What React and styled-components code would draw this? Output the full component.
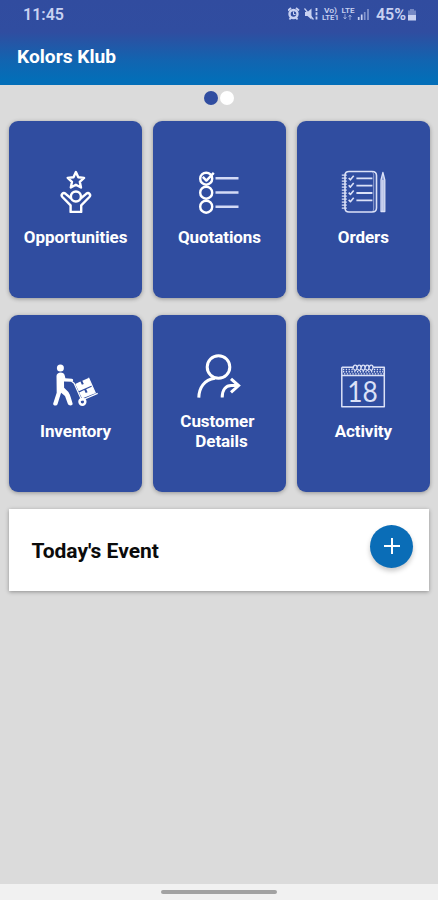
import React from "react"
import styled, { createGlobalStyle } from "styled-components"

const GlobalStyle = createGlobalStyle`
  * {
    box-sizing: border-box;
  }
  body {
    margin: 0;
    background: #dbdbdb;
    font-family: Roboto, "Liberation Sans", sans-serif;
  }
`

const Screen = styled.div`
  height: 900px;
  display: flex;
  flex-direction: column;
  overflow: hidden;
  background: #dbdbdb;
`

const Header = styled.header`
  height: 85px;
  flex: none;
  background: linear-gradient(#314c9f 0, #304da0 32px, #1264b0 60px, #036eb8 80px);
`

const StatusBar = styled.div`
  height: 28px;
  padding: 0 21px 0 23px;
  display: flex;
  align-items: center;
  justify-content: space-between;
  color: #c9d2f2;
  font-size: 16px;
  font-weight: 600;
`

const StatusIcons = styled.div`
  display: flex;
  align-items: center;
  svg {
    display: block;
  }
`

const Battery = styled.span`
  margin: 0 1px 0 5px;
  font-size: 16px;
`

const Title = styled.h1`
  margin: 0;
  padding: 18px 0 0 17px;
  color: white;
  font-size: 19.2px;
  line-height: 22px;
  font-weight: 700;
`

const Pager = styled.div`
  height: 35.5px;
  flex: none;
  display: flex;
  justify-content: center;
  padding-top: 6px;
  gap: 2px;
`

const Dot = styled.span`
  width: 14px;
  height: 14px;
  border-radius: 50%;
  background: ${props => (props.$active ? "#304da0" : "white")};
`

const Grid = styled.main`
  display: grid;
  grid-template-columns: repeat(3, 1fr);
  grid-auto-rows: 177px;
  gap: 17.5px 11.5px;
  padding: 0 8.5px 0 9.4px;
`

const Tile = styled.div`
  display: flex;
  flex-direction: column;
  align-items: center;
  justify-content: center;
  padding-bottom: 1.5px;
  border-radius: 9px;
  background: #304da0;
  box-shadow: 0 1px 4px rgba(0, 0, 0, 0.32);
  color: white;
  svg {
    display: block;
    overflow: visible;
  }
`

const Label = styled.span`
  margin-top: 13px;
  font-size: 17px;
  line-height: 20px;
  font-weight: 700;
  letter-spacing: -0.08px;
  text-align: center;
  white-space: pre-line;
`

const EventCard = styled.section`
  height: 82px;
  flex: none;
  margin: 16.5px 8.6px 0 9.4px;
  padding: 0 16px 0 22px;
  display: flex;
  align-items: center;
  justify-content: space-between;
  background: white;
  box-shadow: 0 1px 4px rgba(0, 0, 0, 0.35);
`

const EventTitle = styled.h2`
  margin: 2px 0 0;
  font-size: 21px;
  font-weight: 700;
  color: #0b0b0b;
`

const AddButton = styled.button`
  width: 43px;
  height: 43px;
  margin-bottom: 7px;
  padding: 0;
  display: flex;
  align-items: center;
  justify-content: center;
  border: 0;
  border-radius: 50%;
  background: #0a6db7;
  box-shadow: 0 3px 5px rgba(0, 0, 0, 0.22);
`

const NavBar = styled.footer`
  height: 16px;
  flex: none;
  margin-top: auto;
  display: flex;
  justify-content: center;
  align-items: center;
  background: #f1f1f1;
`

const Handle = styled.span`
  width: 116px;
  height: 4px;
  border-radius: 2px;
  background: #a2a2a2;
`

const Icon = ({ children, color = "#fff", width = 2 }) => (
  <svg
    width="44"
    height="44"
    viewBox="0 0 44 44"
    fill="none"
    stroke={color}
    strokeWidth={width}
    strokeLinejoin="round"
  >
    {children}
  </svg>
)

const OpportunityIcon = () => (
  <Icon width={2.4}>
    <path d="M21.9 2l2.4 5.2 5.8.7-4.3 3.9 1.2 5.7-5.1-2.8-5.1 2.8 1.2-5.7-4.3-3.900 5.800-.7z" />
    <circle cx="21.900" cy="26.500" r="5" />
    <path d="M17.200 28.500l-5.600-4.700c-2.600-2-5.200 1-3.200 3.200l8.200 8.400v6.500h10.600v-6.500l8.200-8.400c2-2.200-.6-5.200-3.200-3.200l-5.600 4.700" />
  </Icon>
)

const QuotationIcon = () => (
  <Icon width={2.4}>
    <circle cx="9.2" cy="8.7" r="6" />
    <circle cx="9.2" cy="22.7" r="6" />
    <circle cx="9.2" cy="36.7" r="6" />
    <path d="M5.800 6.800l3.600 3.800 7.400-7.800" />
    <path d="M18.500 8.200h23M18.500 22.400h23M18.500 36.700h23" stroke="#d3daf5" strokeWidth="2.500" />
  </Icon>
)

const OrderIcon = () => (
  <Icon color="#dbe1f7" width={1.600}>
    <path d="M4 5.500c0-3 1.500-4 4-4h23c3 0 4.500 1 4.500 4v32.500c0 3-1.500 4-4.500 4H8c-2.500 0-4-1-4-4z" />
    <path d="M31.500 2.500c1 1 1.200 1.500 1.200 3v32.500c0 1.500-.2 2.500-1.200 3.500" strokeWidth="0.600" />
    <path d="M.8 5.200h5M.8 8.200h5M.8 11.200h5M.8 14.200h5M.8 17.200h5M.8 20.200h5M.8 23.200h5M.8 26.200h5M.8 29.200h5M.8 32.200h5M.8 35.200h5M.8 38.200h5" strokeWidth="1.300" />
    <path d="M7.700 8l1.700 1.800 3.300-4M7.700 15.300l1.700 1.800 3.300-4M7.700 22.600l1.700 1.800 3.300-4M7.700 29.900l1.700 1.800 3.300-4" strokeWidth="1.600" />
    <path d="M15.400 8.300h16M15.400 15.700h16M15.400 23h16M15.400 30.300h16" strokeWidth="1.800" />
    <path d="M40 10l1.900-7.500L43.800 10v31.500H40zM41.900 10v31" fill="#8fa0d4" strokeWidth="1.300" />
  </Icon>
)

const InventoryIcon = () => (
  <Icon>
    <g fill="#fff" stroke="none">
      <circle cx="6.400" cy="4" r="3.500" />
      <path d="M2.500 12c0-4.200 7.600-4.800 8.300-.3l.6 2.600 6.400.5c1.900.2 1.800 3 0 3l-7.800-.3.1 6.300 4.300 4.300c2 3 3 7.500 4.200 11.500.6 2.200-4 2.600-4.700.5l-2.900-8-3.900-3.300-1.800 5.800-1.800 5.700c-.8 2.200-5 1.300-4.300-.8l3.500-10.800z" />
      <path d="M21.200 20l5.200-2.400 1.500 3.200 1.900-.8-1.500-3.300 6.200-2.800 3.300 7.500-13.100 5.900z" />
      <path d="M25.100 28.400l5.200-2.300 1.400 3 1.900-.8-1.400-3 6.100-2.700 2.900 6.600-13.100 5.400z" />
    </g>
    <path d="M17.500 17.300l2.600 1.900 7.600 17 16-6.800M34.500 13.700l6.900 15.600" strokeWidth="1.200" />
    <circle cx="28.400" cy="37.800" r="2.900" strokeWidth="2.500" />
  </Icon>
)

const CustomerIcon = () => (
  <Icon width={3}>
    <circle cx="21.500" cy="13" r="11.300" />
    <path d="M1.800 43.600C2 34 7 25.500 18 24.200" />
    <path d="M25.200 43.600c0-8.500 4-12 9-12h7M34 24.800l7.600 6.800-7.600 6.800" strokeLinejoin="miter" />
  </Icon>
)

const Digits = styled.text`
  font-family: Lato, Roboto, sans-serif;
  font-size: 28.5px;
  font-weight: 400;
`

const ActivityIcon = () => (
  <Icon color="#dbe1f7" width={1.500}>
    <path d="M.8 3.200h12M32 3.200h11.300v39.600H.8V3.200M.8 11.600h42.500" />
    <path d="M2 5.500h10M33 5.500h10M2 7.700h40M3 9.900h40" strokeWidth="1.400" strokeDasharray="1.300 1.500" />
    <path d="M12 5c0-5 4-5 4-1.500S13 7 13 5M16 5c0-5 4-5 4-1.500S17 7 17 5M20 5c0-5 4-5 4-1.500S21 7 21 5M24 5c0-5 4-5 4-1.500S25 7 25 5M28 5c0-5 4-5 4-1.500S29 7 29 5" strokeWidth="1.300" />
    <Digits
      x="6.200"
      y="37.900"
      textLength="30.500"
      lengthAdjust="spacingAndGlyphs"
      fill="#dbe1f7"
      stroke="none"
    >
      18
    </Digits>
  </Icon>
)

const tiles = [
  { label: "Opportunities", icon: OpportunityIcon },
  { label: "Quotations", icon: QuotationIcon },
  { label: "Orders", icon: OrderIcon },
  { label: "Inventory", icon: InventoryIcon },
  { label: "Customer\u00a0\n\u00a0Details", icon: CustomerIcon },
  { label: "Activity", icon: ActivityIcon },
]

const Indicators = () => (
  <svg width="83" height="16" viewBox="288 6 83 16" fill="none" stroke="#c9d2f2">
    <circle cx="293.500" cy="14" r="4" strokeWidth="2.400" />
    <path d="M288 10.500l3-2.500M299 10.500l-3-2.500M289.500 19.500l1.500-2M297.500 19.500l-1.500-2" strokeWidth="1.800" />
    <path d="M293.500 11.500v3h2" strokeWidth="1" />
    <path d="M305 12h2.500l4-3.500v11l-4-3.500H305z" fill="#c9d2f2" stroke="none" />
    <path d="M304.500 8.500l9 11" strokeWidth="1.200" />
    <path d="M316.500 8v12" strokeWidth="1.800" strokeDasharray="3 1.300" />
    <g fill="#c9d2f2" stroke="none" fontSize="7.500" fontWeight="600" lengthAdjust="spacingAndGlyphs">
      <text x="324" y="12.700" textLength="13" lengthAdjust="spacingAndGlyphs">Vo)</text>
      <text x="322" y="20" textLength="17" lengthAdjust="spacingAndGlyphs">LTE1</text>
      <text x="341.500" y="12.700" textLength="13" lengthAdjust="spacingAndGlyphs">LTE</text>
    </g>
    <path d="M345 14v5M343.500 17l1.500 2 1.500-2M350 20v-5M348.500 17l1.500-2 1.500 2" strokeWidth="1" opacity="0.600" />
    <path d="M358.700 20v-3M361.700 20v-5.500" strokeWidth="1.700" />
    <path d="M364.700 20v-8M368 20V9" strokeWidth="1.700" opacity="0.550" />
  </svg>
)

const App = () => {
  return (
    <Screen>
      <GlobalStyle />
      <Header>
        <StatusBar>
          <span>11:45</span>
          <StatusIcons>
            <Indicators />
            <Battery>45%</Battery>
            <svg width="10" height="13" viewBox="0 0 10 13" fill="#c9d2f2">
              <path d="M3 1h4v1.500h2V7H1V2.500h2z" opacity="0.450" />
              <path d="M1 7h8v5.500H1z" />
            </svg>
          </StatusIcons>
        </StatusBar>
        <Title>Kolors Klub</Title>
      </Header>
      <Pager>
        <Dot $active />
        <Dot />
      </Pager>
      <Grid>
        {tiles.map(({ label, icon: TileIcon }) => (
          <Tile key={label}>
            <TileIcon />
            <Label>{label}</Label>
          </Tile>
        ))}
      </Grid>
      <EventCard>
        <EventTitle>Today's Event</EventTitle>
        <AddButton aria-label="Add event">
          <svg width="16" height="16" viewBox="0 0 16 16" stroke="#fff" strokeWidth="2">
            <path d="M8 0v16M0 8h16" />
          </svg>
        </AddButton>
      </EventCard>
      <NavBar>
        <Handle />
      </NavBar>
    </Screen>
  )
}

export default App
